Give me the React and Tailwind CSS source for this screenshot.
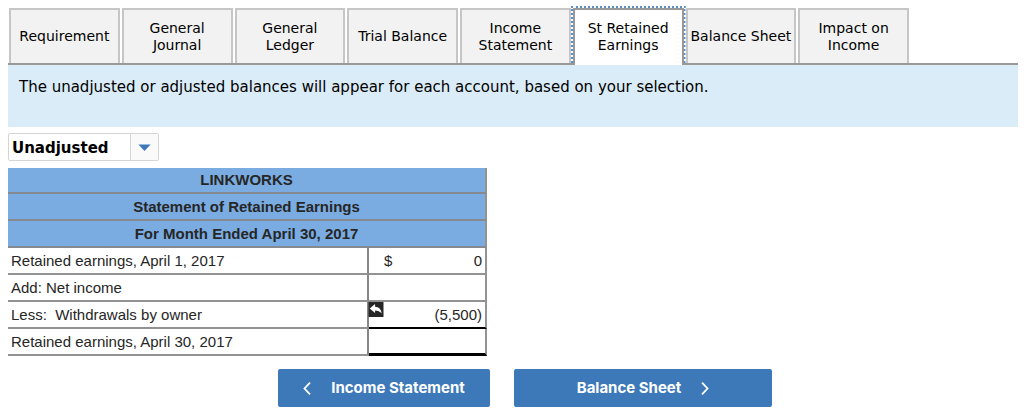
import React from "react";

const tabs = [
  "Requirement",
  "General Journal",
  "General Ledger",
  "Trial Balance",
  "Income Statement",
  "St Retained Earnings",
  "Balance Sheet",
  "Impact on Income",
];

const active = "St Retained Earnings";

const headings = ["LINKWORKS", "Statement of Retained Earnings", "For Month Ended April 30, 2017"];

const label = "h-[27px] border-b-2 border-r-2 border-b-[#929292] border-r-[#868686] p-0 pl-[3px] text-left font-normal";
const amount = "border-r-2 border-r-[#939393] p-0";

function Tab({ name }) {
  const selected = name === active;
  return (
    <button
      type="button"
      role="tab"
      aria-selected={selected}
      className={
        selected
          ? "relative -mb-0.5 border-2 border-b-0 border-[#999999] bg-white pb-0.5 outline-2 outline-dotted outline-[#5b8fc7] [clip-path:inset(-2px_-2px_0_-2px)]"
          : "border-2 border-b-0 border-[#c6c6c6] bg-[#f2f2f2]"
      }
    >
      {name}
    </button>
  );
}

export default function App() {
  return (
    <main className="bg-white px-2 pt-2 pr-1.5 font-['DejaVu_Sans',Verdana,sans-serif] text-black">
      <div className="border-b-2 border-[#999999] pl-px text-sm leading-[17px]">
        <div role="tablist" className="grid h-[55px] max-w-[900px] grid-cols-8 gap-0.5">
          {tabs.map((name) => (
            <Tab key={name} name={name} />
          ))}
        </div>
      </div>
      <p className="min-h-[62px] bg-[#daecf8] px-[11px] pt-3 text-[15px] leading-5">
        The unadjusted or adjusted balances will appear for each account, based on your selection.
      </p>

      <div className="relative mt-1.5 w-[151px]">
        <select
          aria-label="Balance type"
          defaultValue="Unadjusted"
          className="block h-7 w-full appearance-none rounded-xs border border-[#d5d5d5] bg-white pt-0.5 pl-[3px] text-[15px] font-bold"
        >
          <option>Unadjusted</option>
          <option>Adjusted</option>
        </select>
        <span className="pointer-events-none absolute inset-y-px right-px flex w-7 items-center justify-center border-l border-[#d5d5d5] bg-[#fafafa]">
          <svg viewBox="0 0 14 8" className="h-[7px] w-[13px]" fill="#3d79bb" aria-hidden="true">
            <path d="M0 0.5h14L7 8z" />
          </svg>
        </span>
      </div>

      <table className="mt-1.5 w-[479px] table-fixed border-separate border-spacing-0 border-t border-white font-['Liberation_Sans',Arial,sans-serif] text-[15px] leading-5 text-[#262626]">
        <colgroup>
          <col className="w-[361px]" />
          <col />
        </colgroup>
        <thead>
          {headings.map((text, i) => (
            <tr key={text}>
              <th
                colSpan={2}
                className={`${i === 0 ? "h-[26px]" : "h-[27px]"} border-r-2 border-b-2 border-r-[#939393] border-b-[#858a90] bg-[#7aace2] p-0 font-bold`}
              >
                {text}
              </th>
            </tr>
          ))}
        </thead>
        <tbody>
          <tr>
            <th scope="row" className={label}>Retained earnings, April 1, 2017</th>
            <td className={`${amount} border-b-2 border-b-[#929292]`}>
              <div className="flex justify-between pr-[3px] pl-[15px]">
                <span>$</span>
                <span>0</span>
              </div>
            </td>
          </tr>
          <tr>
            <th scope="row" className={label}>Add: Net income</th>
            <td className={`${amount} border-b-2 border-b-[#929292]`} />
          </tr>
          <tr>
            <th scope="row" className={label}>
              Less:&nbsp; Withdrawals by owner
            </th>
            <td className={`${amount} relative border-b-2 border-b-black pr-[3px] text-right`}>
              <svg viewBox="0 0 16 16" className="absolute top-0 -left-px h-[15px] w-4" aria-hidden="true">
                <path fill="#262626" d="M0 0h16v16H0z" />
                <path fill="#fff" d="M1.300 7 7 2.200v2.900c4 .2 6.600 2.400 7 7.200C12.300 9.900 10 9 7 9v2.800z" />
              </svg>
              (5,500)
            </td>
          </tr>
          <tr>
            <th scope="row" className={label}>Retained earnings, April 30, 2017</th>
            <td className={`${amount} border-b-3 border-b-black`} />
          </tr>
        </tbody>
      </table>

      <nav className="mt-[13px] flex gap-6 pl-[270px] font-[Inter,sans-serif] text-[15px] font-bold text-white">
        <button
          type="button"
          className="flex h-[38px] w-[212px] items-center justify-center gap-5 rounded-xs bg-[#3d79b8]"
        >
          <svg viewBox="0 0 8 13" className="h-[13px] w-2" fill="none" stroke="currentColor" strokeWidth="1.8" aria-hidden="true">
            <path d="M7 .7 1.500 6.500 7 12.300" />
          </svg>
          Income Statement
        </button>
        <button
          type="button"
          className="flex h-[38px] w-[258px] items-center justify-center gap-5 rounded-xs bg-[#3d79b8]"
        >
          Balance Sheet
          <svg viewBox="0 0 8 13" className="h-[13px] w-2" fill="none" stroke="currentColor" strokeWidth="1.8" aria-hidden="true">
            <path d="M1 .7 6.500 6.500 1 12.300" />
          </svg>
        </button>
      </nav>
    </main>
  );
}
